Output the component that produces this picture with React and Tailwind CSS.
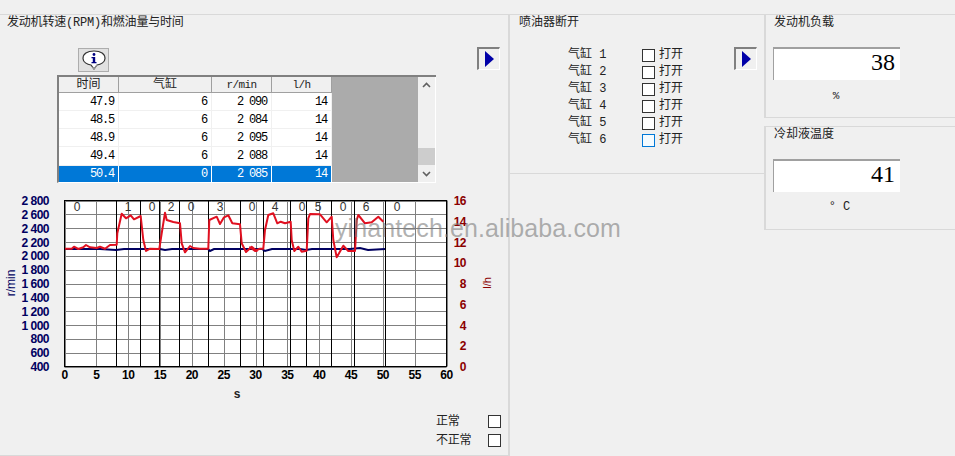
import React from 'react';

const cjk = { fontFamily: '"Liberation Mono", "Noto Sans CJK SC", monospace' };

const rows = [
  ['47.9', '6', '2 090', '14'],
  ['48.5', '6', '2 084', '14'],
  ['48.9', '6', '2 095', '14'],
  ['49.4', '6', '2 088', '14'],
  ['50.4', '0', '2 085', '14'],
];

const redZoom2 = [[195,176],[215,176],[222,170],[235,177],[250,172],[258,165],[270,172],[290,174],[300,170],[315,176],[330,165],[350,164],[352,130],[365,71],[378,85],[392,76],[402,88],[422,78],[430,150],[438,183],[450,176],[478,177],[485,130],[495,68],[500,90],[520,96],[540,100],[545,160],[555,187],[570,168],[580,174],[600,176],[625,176],[628,90],[650,80],[660,102],[672,82],[685,76],[697,100],[720,103],[725,160],[738,186],[755,170],[770,183]];
const redZoom3 = [[0,172],[15,183],[30,176],[40,176],[45,120],[55,75],[70,70],[82,100],[92,95],[105,100],[122,95],[125,150],[133,183],[145,170],[155,185],[170,182],[175,85],[180,72],[210,73],[230,97],[245,80],[250,150],[260,202],[280,167],[295,183],[315,183],[320,90],[325,75],[345,100],[365,97],[385,80],[400,95]];

const chartTop = 186; // svg starts at this page y
const redPoints = [
  ...redZoom2.map(([x, y]) => `${(x / 3).toFixed(1)},${(190 + y / 3 - chartTop).toFixed(1)}`),
  ...redZoom3.map(([x, y]) => `${(250 + x / 3).toFixed(1)},${(190 + y / 3 - chartTop).toFixed(1)}`),
].join(' ');

const bluePoints = [[65,249],[100,249],[116,250],[124,249],[160,249],[165,250],[172,249],[208,249],[210,251],[214,249],[262,249],[265,251],[272,249],[300,249],[306,250],[312,249],[350,249],[360,248],[368,250],[385,249]]
  .map(([x, y]) => `${x},${y - chartTop}`).join(' ');

const yLabels = ['2 800', '2 600', '2 400', '2 200', '2 000', '1 800', '1 600', '1 400', '1 200', '1 000', '800', '600', '400'];
const y2Labels = ['16', '14', '12', '10', '8', '6', '4', '2', '0'];
const xLabels = [0, 5, 10, 15, 20, 25, 30, 35, 40, 45, 50, 55, 60];
const marks = [116.5, 140.5, 159.5, 179.5, 208.5, 240.5, 263.5, 290.5, 306.5, 331.5, 354.5, 385.5];
const cylLabels = [[77,'0'],[128,'1'],[152,'0'],[171,'2'],[191,'0'],[220,'3'],[252,'0'],[275,'4'],[302,'0'],[318,'5'],[343,'0'],[366,'6'],[397,'0']];

const Chart = () => {
  const left = 64.5, right = 446.5, top = 14.5, bottom = 180.5;
  const stepX = (right - left) / 12;
  const stepY = (bottom - top) / 12;
  const sans = { fontFamily: '"Liberation Sans", sans-serif' };
  return (
    <svg width="508" height="226" className="block" style={sans}>
      <rect x={left} y={top} width={right - left} height={bottom - top} fill="#fff" />
      {xLabels.map((_, i) => (
        <line key={i} x1={Math.round(left + i * stepX) + 0.5} x2={Math.round(left + i * stepX) + 0.5} y1={top} y2={bottom} stroke="#808080" />
      ))}
      {yLabels.map((_, i) => (
        <line key={i} x1={left} x2={right} y1={Math.round(top + i * stepY) + 0.5} y2={Math.round(top + i * stepY) + 0.5} stroke="#808080" />
      ))}
      {marks.map(x => (
        <line key={x} x1={x} x2={x} y1={top} y2={bottom} stroke="#000" />
      ))}
      <rect x={left} y={top} width={right - left} height={bottom - top} fill="none" stroke="#000" />
      {cylLabels.map(([x, t], i) => (
        <text key={i} x={x} y={25} textAnchor="middle" fontSize="12" fill="#333">{t}</text>
      ))}
      <polyline points={bluePoints} fill="none" stroke="#000060" strokeWidth="2" />
      <polyline points={redPoints} fill="none" stroke="#e01020" strokeWidth="2" strokeLinejoin="round" />
      {yLabels.map((t, i) => (
        <text key={t} x={49} y={top + i * stepY + 4.5} textAnchor="end" fontSize="12" fontWeight="700" letterSpacing="-0.5" fill="#000060">{t}</text>
      ))}
      {y2Labels.map((t, i) => (
        <text key={t} x={466} y={top + i * 20.75 + 4.5} textAnchor="end" fontSize="12" fontWeight="700" letterSpacing="-0.5" fill="#8b0000">{t}</text>
      ))}
      {xLabels.map((t, i) => (
        <text key={t} x={left + i * stepX} y={193} textAnchor="middle" fontSize="12" fontWeight="700" letterSpacing="-0.5" fill="#000">{t}</text>
      ))}
      <text x={237} y={212} textAnchor="middle" fontSize="12" fontWeight="700" fill="#222">s</text>
      <text transform="translate(15 97) rotate(-90)" textAnchor="middle" fontSize="12" fill="#000060">r/min</text>
      <text transform="translate(491 97) rotate(-90)" textAnchor="middle" fontSize="11" fill="#8b0000">l/h</text>
    </svg>
  );
};

const ArrowButton = () => (
  <div className="w-[23px] h-[23px] flex items-center justify-center border-t-2 border-l-2 border-t-[#808080] border-l-[#808080] border-r border-b border-r-white border-b-white bg-[#f0f0f0]">
    <svg width="9" height="16" viewBox="0 0 9 16"><path d="M0 0 L9 8 L0 16 Z" fill="#0000a8" /></svg>
  </div>
);

const InfoButton = () => (
  <div className="w-[31px] h-[24px] flex items-center justify-center bg-[#e1e1e1] border border-[#adadad]">
    <svg width="24" height="20" viewBox="0 0 24 20">
      <path d="M12 1 C5 1 1 4 1 8.5 C1 12 5 14.5 9 15 L12 19 L15 15 C19 14.5 23 12 23 8.5 C23 4 19 1 12 1 Z" fill="#fff" stroke="#333" strokeWidth="1.2" />
      <path d="M15 15 L12 19 L10.5 17" fill="none" stroke="#999" strokeWidth="1.2" />
      <circle cx="12" cy="4.5" r="1.4" fill="#000080" />
      <path d="M9.5 7 H13.2 V12 H14.5 V13.3 H9.5 V12 H10.8 V8.3 H9.5 Z" fill="#000080" />
    </svg>
  </div>
);

const Check = ({ focus }) => (
  <span className={`block w-[13px] h-[13px] border ${focus ? 'border-[#0078d7] bg-[#f4fbff]' : 'border-[#333] bg-white'}`} />
);

const Readout = ({ value }) => (
  <div className="w-[127px] h-[33px] bg-white border-t-2 border-l border-t-[#a0a0a0] border-l-[#a0a0a0] flex items-center justify-end pr-[5px] pb-[6px] text-[24px] leading-none text-black" style={{ fontFamily: '"Liberation Serif", serif' }}>
    {value}
  </div>
);

export default function App() {
  return (
    <div className="relative w-[955px] h-[456px] overflow-hidden bg-[#f0f0f0] text-[12px] leading-[14px] text-[#222]" style={cjk}>
      <div className="h-[15px] border-b border-[#d9d9d9]" />
      <div className="flex items-start">
        {/* Left panel */}
        <section className="w-[510px] h-[441px] border-r-2 border-b border-[#d9d9d9] shrink-0">
          <h2 className="pl-[7px] pt-[1px] h-[33px] font-normal tracking-[-0.2px]">发动机转速(RPM)和燃油量与时间</h2>
          <div className="flex items-start h-[27px]">
            <div className="ml-[78px]"><InfoButton /></div>
            <div className="ml-[368px] -mt-[1px]"><ArrowButton /></div>
          </div>
          <div className="ml-[57px] w-[379px] h-[108px] flex bg-[#ababab] border-t-2 border-l-2 border-t-[#808080] border-l-[#808080] border-b border-b-white">
            <div className="w-[273px] shrink-0">
              <div className="grid grid-cols-[60px_93px_60px_60px] h-[16px] bg-[#f0f0f0] border-b border-[#a0a0a0]">
                {['时间', '气缸'].map(h => (
                  <div key={h} className="flex items-center justify-center border-r border-[#a0a0a0] text-[12px]">{h}</div>
                ))}
                {['r/min', 'l/h'].map(h => (
                  <div key={h} className="flex items-center justify-center border-r border-[#a0a0a0] text-[11px] tracking-[-0.6px]">{h}</div>
                ))}
              </div>
              {rows.map((r, i) => (
                <div key={r[0]} className={`grid grid-cols-[60px_93px_60px_60px] text-[12px] tracking-[-1.2px] ${i === 4 ? 'h-[16px] bg-[#0078d7] text-white' : i === 3 ? 'h-[19px] bg-white text-black border-b border-[#f0f0f0]' : 'h-[18px] bg-white text-black border-b border-[#f0f0f0]'}`}>
                  {r.map((c, j) => (
                    <div key={j} className={`flex items-center justify-end pr-[4px] border-r ${i === 4 ? 'border-white' : 'border-[#f0f0f0]'}`}>{c}</div>
                  ))}
                </div>
              ))}
            </div>
            <div className="flex-1" />
            <div className="w-[18px] h-full bg-[#f0f0f0] border-r border-white flex flex-col items-center justify-between py-[5px] relative">
              <svg width="9" height="6" viewBox="0 0 9 6"><path d="M1 5 L4.5 1.5 L8 5" fill="none" stroke="#606060" strokeWidth="1.6" /></svg>
              <div className="absolute left-0 top-[71px] w-[17px] h-[17px] bg-[#cdcdcd]" />
              <svg width="9" height="6" viewBox="0 0 9 6"><path d="M1 1 L4.5 4.5 L8 1" fill="none" stroke="#606060" strokeWidth="1.6" /></svg>
            </div>
          </div>
          <div className="mt-[3px]"><Chart /></div>
          <div className="pl-[436px] tracking-[-0.2px]">
            <div className="flex items-center justify-between w-[65px] h-[19px]"><span>正常</span><Check /></div>
            <div className="flex items-center justify-between w-[65px] h-[19px]"><span>不正常</span><Check /></div>
          </div>
        </section>

        {/* Injector panel */}
        <section className="w-[254px] h-[159px] border-b border-[#d9d9d9] shrink-0">
          <h2 className="pl-[9px] pt-[1px] h-[32px] font-normal">喷油器断开</h2>
          <div className="flex items-start">
            <div className="ml-[58px] flex flex-col">
              {[1, 2, 3, 4, 5, 6].map((n, i) => (
                <div key={n} className="flex items-center h-[17px]">
                  <span className="w-[74px] -mt-[1px]">气缸 {n}</span>
                  <Check focus={i === 5} />
                  <span className="ml-[4px] -mt-[1px]">打开</span>
                </div>
              ))}
            </div>
            <div className="ml-[51px]"><ArrowButton /></div>
          </div>
        </section>

        {/* Right panels */}
        <div className="flex-1 flex flex-col">
          <section className="h-[103px] border-b border-l-2 border-[#d9d9d9] pl-[7px]">
            <h2 className="pl-[1px] pt-[1px] h-[32px] font-normal">发动机负载</h2>
            <Readout value="38" />
            <div className="w-[127px] mt-[9px] pr-[1px] text-center text-[11px]">%</div>
          </section>
          <section className="mt-[8px] h-[104px] border-t border-b border-l-2 border-[#d9d9d9] pl-[7px]">
            <h2 className="pl-[1px] pt-[1px] h-[32px] font-normal">冷却液温度</h2>
            <Readout value="41" />
            <div className="w-[127px] mt-[8px] pl-[6px] text-center text-[12px]">° C</div>
          </section>
        </div>
      </div>

      <div className="absolute left-[335px] top-[213px] text-[25px] leading-[30px] tracking-[0.1px] text-[#7d7d7d]/60 pointer-events-none" style={{ fontFamily: '"Liberation Sans", sans-serif' }}>
        yihantech.en.alibaba.com
      </div>
    </div>
  );
}
